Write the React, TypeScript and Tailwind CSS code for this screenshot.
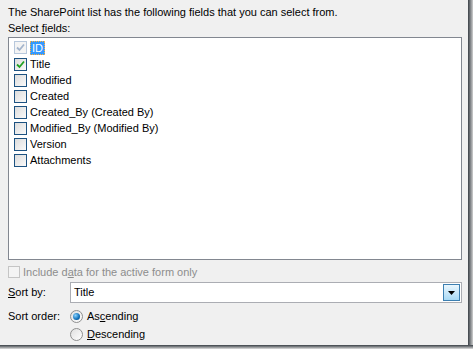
import React from "react";

const fields = [
  { label: "ID", checked: true, disabled: true, selected: true },
  { label: "Title", checked: true },
  { label: "Modified" },
  { label: "Created" },
  { label: "Created_By (Created By)" },
  { label: "Modified_By (Modified By)" },
  { label: "Version" },
  { label: "Attachments" },
];

function Check({ checked, disabled }: { checked?: boolean; disabled?: boolean }) {
  return (
    <span
      className={
        "flex h-[13px] w-[13px] shrink-0 items-center justify-center border " +
        (disabled
          ? "border-[#b8c8dc] bg-[#f4f4f4]"
          : "border-[#1d5281] bg-gradient-to-br from-[#dcdcdc] to-[#fafafa]")
      }
    >
      {checked && (
        <svg width="9" height="9" viewBox="0 0 9 9">
          <path
            d="M1 4.5 L3.5 7 L8 1.5"
            fill="none"
            stroke={disabled ? "#a3b4cc" : "#21a121"}
            strokeWidth="1.8"
          />
        </svg>
      )}
    </span>
  );
}

function Radio({ on }: { on?: boolean }) {
  return (
    <span className="flex h-[13px] w-[13px] shrink-0 items-center justify-center rounded-full border border-[#8e8f8f] bg-gradient-to-br from-[#e0e0e0] to-[#fefefe]">
      {on && (
        <span className="h-[7px] w-[7px] rounded-full bg-[radial-gradient(circle_at_35%_35%,#8ad3ff,#0f6fb8_60%,#0a3d73)]" />
      )}
    </span>
  );
}

export default function App() {
  return (
    <div className="h-[349px] w-[473px] bg-white font-['Liberation_Sans',sans-serif] text-[11px] text-black">
      <div className="flex h-[349px] w-[473px] flex-col">
        <div className="flex flex-1">
          {/* dialog body */}
          <div className="flex h-[345px] w-[468px] flex-col bg-[#f0f0f0] pl-[8px] pr-[6px] pt-[4px]">
            <div className="h-[16px] leading-[16px]">
              The SharePoint list has the following fields that you can select from.
            </div>
            <div className="h-[16px] leading-[16px]">
              Select <u>f</u>ields:
            </div>

            {/* fields list */}
            <div className="mt-[1px] h-[223px] w-[454px] border border-[#828790] bg-white pl-[5px]">
              {fields.map((f, i) => (
                <div
                  key={f.label}
                  className={"flex items-center gap-[3px] " + (i === 0 ? "h-[18px] pt-[1px]" : "h-[16px]")}
                >
                  <Check checked={f.checked} disabled={f.disabled} />
                  {f.selected ? (
                    <span className="border border-dotted border-[#ffb040] bg-[#3399ff] px-[1px] leading-[12px] text-white">
                      {f.label}
                    </span>
                  ) : (
                    <span className="leading-[14px]">{f.label}</span>
                  )}
                </div>
              ))}
            </div>

            <div className="mt-[6px] flex h-[12px] items-center gap-[3px] text-[#8d8d8d]">
              <span className="h-[12px] w-[12px] border border-[#c5c5c5] bg-[#f4f4f4]" />
              <span>
                Include d<u>a</u>ta for the active form only
              </span>
            </div>

            <div className="mt-[4px] flex h-[21px] items-center">
              <span className="w-[62px]">
                <u>S</u>ort by:
              </span>
              <div className="flex h-[21px] flex-1 items-center justify-between border border-[#abadb3] bg-white pl-[3px] pr-[1px]">
                <span>Title</span>
                <span className="flex h-[17px] w-[17px] items-center justify-center border border-[#3c7fb1] bg-gradient-to-b from-[#eaf6fd] to-[#a7d9f5]">
                  <svg width="7" height="4" viewBox="0 0 7 4">
                    <path d="M0 0 H7 L3.5 4 Z" fill="#000" />
                  </svg>
                </span>
              </div>
            </div>

            <div className="mt-[5px] flex h-[16px] items-center">
              <span className="w-[62px]">Sort order:</span>
              <Radio on />
              <span className="ml-[4px]">
                As<u>c</u>ending
              </span>
            </div>
            <div className="mt-[2px] flex h-[16px] items-center">
              <span className="w-[62px]" />
              <Radio />
              <span className="ml-[4px]">
                <u>D</u>escending
              </span>
            </div>
          </div>
          {/* right shadow */}
          <div className="h-[345px] w-[5px] bg-gradient-to-r from-[#3b4147] to-[#d0d0d0]" />
        </div>
        {/* bottom shadow */}
        <div className="h-[4px] w-[473px] bg-gradient-to-b from-[#3b4147] to-[#e0e0e0]" />
      </div>
    </div>
  );
}
